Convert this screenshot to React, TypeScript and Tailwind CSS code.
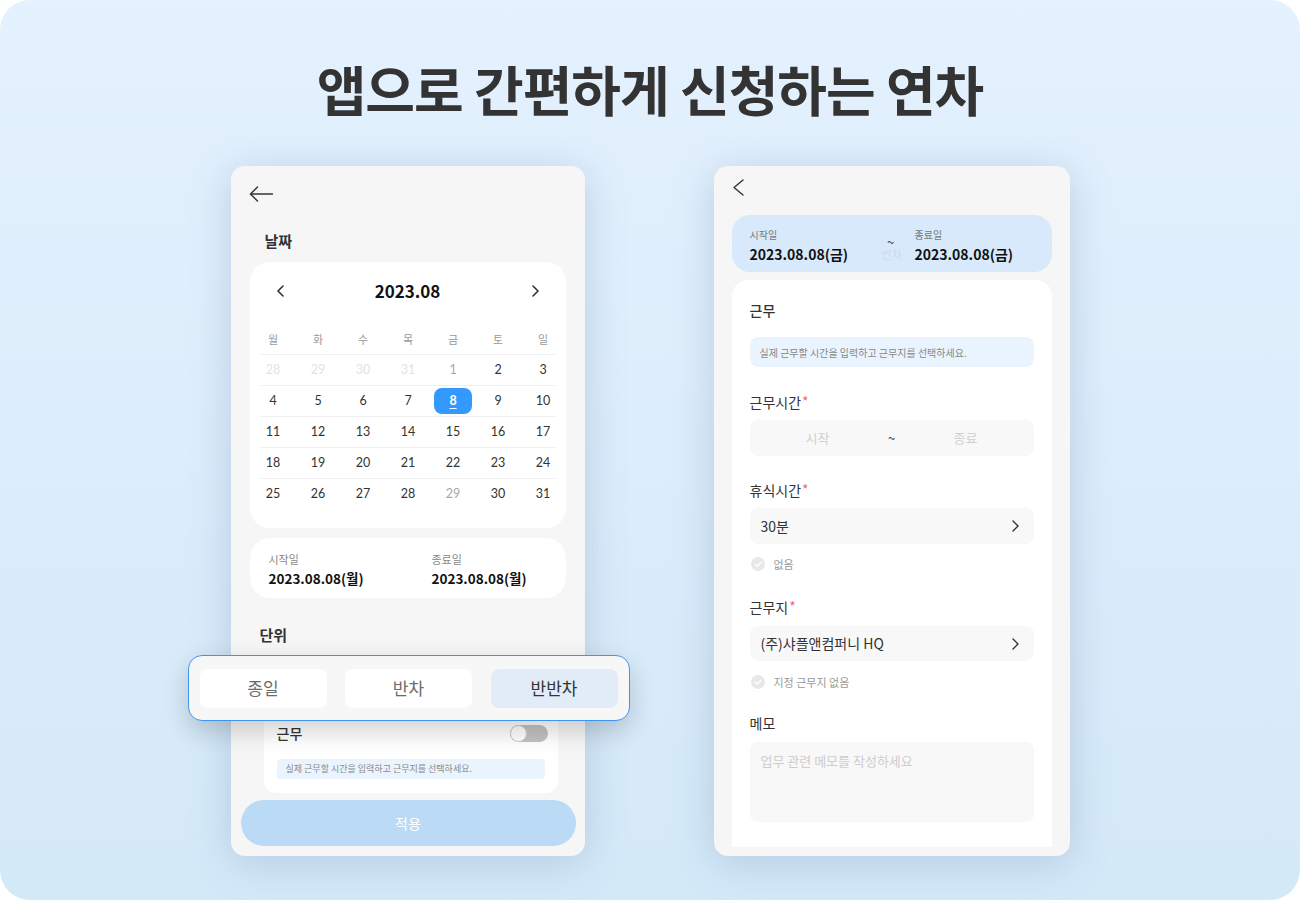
import React from "react";

const KR = { fontFamily: '"Noto Sans CJK KR", "Noto Sans", sans-serif' };
const LATO = { fontFamily: 'Lato, "Noto Sans CJK KR", sans-serif' };

function BackArrow() {
  return (
    <svg width="25" height="16" viewBox="0 0 25 16" fill="none" stroke="#333" strokeWidth="1.4" strokeLinecap="round" strokeLinejoin="round">
      <path d="M1.5 8H23.5" />
      <path d="M8.5 1L1.5 8L8.5 15" />
    </svg>
  );
}

function ChevronLeft({ w = 8, h = 12, sw = 1.6, color = "#333" }: { w?: number; h?: number; sw?: number; color?: string }) {
  return (
    <svg width={w} height={h} viewBox={`0 0 ${w} ${h}`} fill="none" stroke={color} strokeWidth={sw} strokeLinecap="round" strokeLinejoin="round">
      <path d={`M${w - 1} 1L1 ${h / 2}L${w - 1} ${h - 1}`} />
    </svg>
  );
}

function ChevronRight({ w = 8, h = 12, sw = 1.6, color = "#333" }: { w?: number; h?: number; sw?: number; color?: string }) {
  return (
    <svg width={w} height={h} viewBox={`0 0 ${w} ${h}`} fill="none" stroke={color} strokeWidth={sw} strokeLinecap="round" strokeLinejoin="round">
      <path d={`M1 1L${w - 1} ${h / 2}L1 ${h - 1}`} />
    </svg>
  );
}

function CheckCircle() {
  return (
    <svg width="14" height="14" viewBox="0 0 14 14">
      <circle cx="7" cy="7" r="7" fill="#e8e8e8" />
      <path d="M4 7.2L6.1 9.2L10 5.2" fill="none" stroke="#fff" strokeWidth="1.4" strokeLinecap="round" strokeLinejoin="round" />
    </svg>
  );
}

type Day = { d: number; c: "faint" | "gray" | "dark" | "sel" };

const rows: Day[][] = [
  [
    { d: 28, c: "faint" },
    { d: 29, c: "faint" },
    { d: 30, c: "faint" },
    { d: 31, c: "faint" },
    { d: 1, c: "gray" },
    { d: 2, c: "dark" },
    { d: 3, c: "dark" },
  ],
  [4, 5, 6, 7, 8, 9, 10].map((d) => ({ d, c: d === 8 ? "sel" : "dark" }) as Day),
  [11, 12, 13, 14, 15, 16, 17].map((d) => ({ d, c: "dark" }) as Day),
  [18, 19, 20, 21, 22, 23, 24].map((d) => ({ d, c: "dark" }) as Day),
  [25, 26, 27, 28, 29, 30, 31].map((d) => ({ d, c: d === 29 ? "gray" : "dark" }) as Day),
];

function Calendar() {
  const week = ["월", "화", "수", "목", "금", "토", "일"];
  return (
    <div className="mx-[19px] mt-[2px] h-[266px] rounded-[20px] bg-white pt-[16px]">
      <div className="flex h-[26px] items-center justify-between px-[27px]">
        <ChevronLeft w={7} h={12} />
        <div className="text-[17px] font-semibold text-[#111]" style={KR}>
          2023.08
        </div>
        <ChevronRight w={7} h={12} />
      </div>
      <div className="mt-[22px] grid h-[28px] grid-cols-7 items-center pb-[2px] pl-[1px]">
        {week.map((w) => (
          <div key={w} className="text-center text-[11px] text-[#9a9a9a]" style={KR}>
            {w}
          </div>
        ))}
      </div>
      {rows.map((r, i) => (
        <div key={i} className="mx-[10px] h-[31px] border-t border-[#efefef]">
          <div className="-mx-[10px] grid h-[30px] grid-cols-7 items-center pl-[1px]">
            {r.map((day, j) => (
              <div key={j} className="flex items-center justify-center">
                {day.c === "sel" ? (
                  <div className="flex h-[26px] w-[38px] items-center justify-center rounded-[8px] bg-[#3399ff] text-[12.5px] font-bold text-white underline underline-offset-[3px]" style={LATO}>
                    {day.d}
                  </div>
                ) : (
                  <span
                    className={
                      "text-[12.5px] " +
                      (day.c === "faint" ? "text-[#e3e3e3]" : day.c === "gray" ? "text-[#a8a8a8]" : "text-[#333]")
                    }
                    style={LATO}
                  >
                    {day.d}
                  </span>
                )}
              </div>
            ))}
          </div>
        </div>
      ))}
    </div>
  );
}

function LeftPhone() {
  return (
    <div className="relative flex h-[690px] w-[354px] flex-col rounded-[14px] bg-[#f6f6f6] shadow-[0_6px_40px_rgba(90,120,160,0.28)]" style={KR}>
      <div className="flex h-[56px] items-center pl-[18px]">
        <BackArrow />
      </div>
      <div className="flex h-[38px] items-center pl-[34px] text-[15px] font-bold text-[#333]">날짜</div>
      <Calendar />
      <div className="mx-[19px] mt-[10px] flex h-[60px] rounded-[20px] bg-white pl-[19px] pt-[12px]">
        <div className="w-[163px]">
          <div className="text-[11px] leading-[18px] text-[#888]">시작일</div>
          <div className="text-[13.5px] font-bold leading-[20px] text-[#111]">2023.08.08(월)</div>
        </div>
        <div>
          <div className="text-[11px] leading-[18px] text-[#888]">종료일</div>
          <div className="text-[13.5px] font-bold leading-[20px] text-[#111]">2023.08.08(월)</div>
        </div>
      </div>
      <div className="flex h-[74px] items-center pl-[29px] text-[15px] font-bold text-[#333]">단위</div>
      <div className="ml-[33px] mr-[27px] mt-[14px] h-[107px] rounded-[12px] bg-white px-[13px] pt-[35px]">
        <div className="flex h-[24px] items-center justify-between">
          <span className="text-[14px] font-medium text-[#333]">근무</span>
          <div className="relative mr-[-3px] h-[17px] w-[38px] rounded-full bg-[#c2c2c2]">
            <div className="absolute left-0 top-0 h-[17px] w-[17px] rounded-full border border-[#cfcfcf] bg-white" />
          </div>
        </div>
        <div className="mt-[14px] flex h-[20px] items-center rounded-[4px] bg-[#eaf4fe] pl-[9px] text-[9px] text-[#888]">
          실제 근무할 시간을 입력하고 근무지를 선택하세요.
        </div>
      </div>
      <div className="ml-[10px] mr-[9px] mt-[7px] flex h-[46px] items-center justify-center rounded-full bg-[#badaf5] text-[14px] text-white">
        적용
      </div>

      <div className="absolute left-[-43px] top-[489px] flex h-[66px] w-[442px] items-center justify-between rounded-[14px] border-[1.5px] border-[#3d94f2] bg-[#f7f7f7] px-[11px] shadow-[0_10px_26px_rgba(0,0,0,0.18)]">
        <div className="flex h-[39px] w-[127px] items-center justify-center rounded-[8px] bg-white text-[17px] text-[#6b6b6b]">종일</div>
        <div className="flex h-[39px] w-[127px] items-center justify-center rounded-[8px] bg-white text-[17px] text-[#6b6b6b]">반차</div>
        <div className="flex h-[39px] w-[127px] items-center justify-center rounded-[8px] bg-[#e2ecf7] text-[17px] text-[#333]">반반차</div>
      </div>
    </div>
  );
}

function Label({ text, star }: { text: string; star?: boolean }) {
  return (
    <div className="flex h-[24px] items-center text-[14px] text-[#333]">
      {text}
      {star && <span className="ml-[1px] -mt-[2px] text-[14px] leading-[14px] text-[#f26a6a]">*</span>}
    </div>
  );
}

function SelectBox({ value, h = 36 }: { value: string; h?: number }) {
  return (
    <div className={"flex items-center justify-between rounded-[8px] bg-[#f8f8f8] pl-[11px] pr-[15px] " + (h === 36 ? "h-[36px]" : "h-[35px]")}>
      <span className="text-[14px] text-[#333]">{value}</span>
      <ChevronRight w={7} h={12} sw={1.4} />
    </div>
  );
}

function RightPhone() {
  return (
    <div className="flex h-[690px] w-[356px] flex-col rounded-[14px] bg-[#f6f6f6] shadow-[0_6px_40px_rgba(90,120,160,0.28)]" style={KR}>
      <div className="flex h-[42px] items-center pl-[19px]">
        <ChevronLeft w={11} h={17} sw={1.4} />
      </div>
      <div className="relative mx-[18px] mt-[7px] flex h-[57px] rounded-[18px] bg-[#d7e9fa] pl-[18px] pt-[11px]">
        <div className="w-[165px]">
          <div className="text-[10px] leading-[18px] text-[#777]">시작일</div>
          <div className="text-[14px] font-bold leading-[20px] text-[#111]">2023.08.08(금)</div>
        </div>
        <div>
          <div className="text-[10px] leading-[18px] text-[#777]">종료일</div>
          <div className="text-[14px] font-bold leading-[20px] text-[#111]">2023.08.08(금)</div>
        </div>
        <div className="absolute left-[150px] top-[32px] whitespace-nowrap text-[11px] leading-[14px] text-[#cadcee]">반차</div>
        <div className="absolute left-[153px] top-[21px] w-[12px] text-center text-[13px] leading-[12px] text-[#444]">~</div>
      </div>
      <div className="mx-[18px] mt-[8px] flex h-[567px] flex-col rounded-t-[16px] bg-white px-[18px]">
        <div className="mt-[18px] flex h-[24px] items-center text-[14px] font-medium text-[#333]">근무</div>
        <div className="mt-[15px] flex h-[30px] items-center rounded-[8px] bg-[#eaf4fe] pl-[10px] text-[10px] text-[#888]">
          실제 근무할 시간을 입력하고 근무지를 선택하세요.
        </div>
        <div className="mt-[23px]">
          <Label text="근무시간" star />
        </div>
        <div className="mt-[6px] flex h-[36px] items-center rounded-[8px] bg-[#f8f8f8] text-[13px]">
          <div className="flex-1 text-center text-[#cfcfcf]">시작</div>
          <div className="w-[12px] text-center text-[#444]">~</div>
          <div className="flex-1 text-center text-[#cfcfcf]">종료</div>
        </div>
        <div className="mt-[22px]">
          <Label text="휴식시간" star />
        </div>
        <div className="mt-[6px]">
          <SelectBox value="30분" />
        </div>
        <div className="mt-[10px] flex h-[20px] items-center gap-[9px] pl-[1px] text-[11px] text-[#999]">
          <CheckCircle />
          없음
        </div>
        <div className="mt-[21px]">
          <Label text="근무지" star />
        </div>
        <div className="mt-[7px]">
          <SelectBox value="(주)샤플앤컴퍼니 HQ" h={35} />
        </div>
        <div className="mt-[11px] flex h-[20px] items-center gap-[9px] pl-[1px] text-[11px] text-[#999]">
          <CheckCircle />
          지정 근무지 없음
        </div>
        <div className="mt-[19px]">
          <Label text="메모" />
        </div>
        <div className="mt-[7px] h-[80px] rounded-[8px] bg-[#f8f8f8] pl-[11px] pt-[9px] text-[13px] text-[#cdcdcd]">
          업무 관련 메모를 작성하세요
        </div>
      </div>
    </div>
  );
}

export default function App() {
  return (
    <div className="h-[900px] w-[1300px] bg-white" style={KR}>
      <div className="flex h-[900px] w-[1300px] flex-col items-center rounded-[30px] bg-gradient-to-b from-[#e4f1fe] to-[#d4e9f8]">
        <h1 className="mt-[60px] text-[54px] font-bold leading-[58px] tracking-[-1px] text-[#333]">앱으로 간편하게 신청하는 연차</h1>
        <div className="mt-[48px] flex gap-[129px]">
          <LeftPhone />
          <RightPhone />
        </div>
      </div>
    </div>
  );
}
